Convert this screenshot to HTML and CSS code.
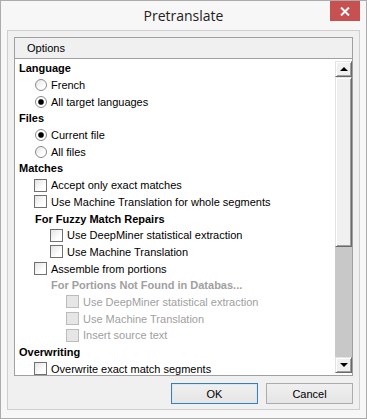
FILE: index.html
```html
<!DOCTYPE html>
<html>
<head>
    <meta charset="UTF-8">
    <title>Pretranslate</title>
    <link rel="stylesheet" href="styles.css">
</head>
<body>
    <div class="window">
        <div class="titlebar">
            <span></span>
            <span class="title">Pretranslate</span>
            <div class="close">
                <svg width="10" height="9" viewBox="0 0 10 9">
                    <path d="M1 0.5 L9 8.5 M9 0.5 L1 8.5" stroke="#fff" stroke-width="2"/>
                </svg>
            </div>
        </div>

        <div class="client">
            <div class="group">
                <div class="group-head">Options</div>
                <div class="list">
                    <div class="rows">
                        <div class="row head">Language</div>
                        <div class="row i1"><span class="radio"></span>French</div>
                        <div class="row i1"><span class="radio on"></span>All target languages</div>
                        <div class="row head">Files</div>
                        <div class="row i1"><span class="radio on"></span>Current file</div>
                        <div class="row i1"><span class="radio"></span>All files</div>
                        <div class="row head">Matches</div>
                        <div class="row i1"><span class="check"></span>Accept only exact matches</div>
                        <div class="row i1"><span class="check"></span>Use Machine Translation for whole segments</div>
                        <div class="row sub-head">For Fuzzy Match Repairs</div>
                        <div class="row i2"><span class="check"></span>Use DeepMiner statistical extraction</div>
                        <div class="row i2"><span class="check"></span>Use Machine Translation</div>
                        <div class="row i1"><span class="check"></span>Assemble from portions</div>
                        <div class="row sub-head2 off">For Portions Not Found in Databas...</div>
                        <div class="row i3 off"><span class="check"></span>Use DeepMiner statistical extraction</div>
                        <div class="row i3 off"><span class="check"></span>Use Machine Translation</div>
                        <div class="row i3 off"><span class="check"></span>Insert source text</div>
                        <div class="row head">Overwriting</div>
                        <div class="row i1"><span class="check"></span>Overwrite exact match segments</div>
                    </div>
                    <div class="scrollbar">
                        <div class="sb-btn"><span class="arrow-up"></span></div>
                        <div class="sb-thumb"></div>
                        <div class="sb-track"></div>
                        <div class="sb-btn"><span class="arrow-down"></span></div>
                    </div>
                </div>
            </div>

            <div class="buttons">
                <button class="btn default">OK</button>
                <button class="btn">Cancel</button>
            </div>
        </div>
    </div>
</body>
</html>
```

FILE: styles.css
```css
body {
    margin: 0;
    background: #f7f7f7;
    font-family: "Liberation Sans", Arial, sans-serif;
    font-size: 11px;
    color: #000;
}
.window {
    width: 367px;
    height: 419px;
    box-sizing: border-box;
    border: 1px solid #acacac;
    background: #f7f7f7;
    padding: 0 6px 8px 6px;
}
.titlebar {
    height: 29px;
    display: grid;
    grid-template-columns: 1fr auto 1fr;
    align-items: start;
}
.title {
    font-family: "Open Sans", sans-serif;
    font-size: 14px;
    color: #222;
    line-height: 30px;
}
.close {
    justify-self: end;
    width: 30px;
    height: 20px;
    background: #c75050;
    display: flex;
    align-items: center;
    justify-content: center;
}

.client {
    height: 380px;
    box-sizing: border-box;
    border: 1px solid #cfcfcf;
    background: #f0f0f0;
    padding: 6px 6px 5px 6px;
    display: flex;
    flex-direction: column;
}
.group {
    height: 339px;
    box-sizing: border-box;
    border: 1px solid #a0a0a0;
    display: flex;
    flex-direction: column;
}
.group-head {
    height: 20px;
    border-bottom: 1px solid #a0a0a0;
    padding-left: 12px;
    line-height: 21px;
    background: #f0f0f0;
}
.list {
    flex: 1;
    min-height: 0;
    background: #fff;
    display: flex;
}
.rows {
    flex: 1;
    overflow: hidden;
    padding-top: 1px;
}
.row {
    height: 16.7px;
    display: flex;
    align-items: center;
    white-space: nowrap;
}
.head { font-weight: bold; padding-left: 4px; }
.sub-head { font-weight: bold; padding-left: 20px; }
.sub-head2 { font-weight: bold; padding-left: 36px; }
.i1 { padding-left: 19px; }
.i2 { padding-left: 35px; }
.i3 { padding-left: 51px; }
.off { color: #a0a0a0; }

.check {
    width: 13px;
    height: 13px;
    box-sizing: border-box;
    border: 1px solid #707070;
    background: linear-gradient(135deg, #e4e4e4, #fff 70%);
    margin-right: 4px;
    flex: none;
}
.off .check {
    border-color: #bcbcbc;
    background: #e6e6e6;
}
.radio {
    width: 12px;
    height: 12px;
    box-sizing: border-box;
    border: 1px solid #8a8a8a;
    border-radius: 50%;
    background: linear-gradient(135deg, #e4e4e4, #fff 70%);
    margin: 0 4px 0 1px;
    flex: none;
}
.radio.on {
    background: radial-gradient(circle, #000 2.2px, #777 2.8px, transparent 3.4px), #fff;
}

.scrollbar {
    width: 17px;
    margin: 2px 0;
    display: flex;
    flex-direction: column;
}
.sb-btn {
    height: 16px;
    box-sizing: border-box;
    background: #f0f0f0;
    border-top: 1px solid #e3e3e3;
    border-left: 1px solid #e3e3e3;
    border-right: 1px solid #696969;
    border-bottom: 1px solid #696969;
    box-shadow: inset 1px 1px #fff, inset -1px -1px #a0a0a0;
    display: flex;
    align-items: center;
    justify-content: center;
}
.arrow-up {
    border-left: 4px solid transparent;
    border-right: 4px solid transparent;
    border-bottom: 4px solid #000;
}
.arrow-down {
    border-left: 4px solid transparent;
    border-right: 4px solid transparent;
    border-top: 4px solid #000;
}
.sb-thumb {
    height: 170px;
    box-sizing: border-box;
    background: #f0f0f0;
    border-top: 1px solid #e3e3e3;
    border-left: 1px solid #e3e3e3;
    border-right: 1px solid #696969;
    border-bottom: 1px solid #696969;
    box-shadow: inset 1px 1px #fff, inset -1px -1px #a0a0a0;
}
.sb-track {
    flex: 1;
    background: #c8c8c8;
}

.buttons {
    margin-top: 7px;
    display: flex;
    justify-content: flex-end;
    gap: 8px;
}
.btn {
    width: 87px;
    height: 21px;
    box-sizing: border-box;
    border: 1px solid #acacac;
    background: linear-gradient(#f0f0f0, #e5e5e5);
    font-family: "Liberation Sans", Arial, sans-serif;
    font-size: 11px;
    color: #000;
    padding: 0;
}
.btn.default {
    border-color: #3c7fb1;
    box-shadow: inset 0 0 0 1px #d7e8f6;
}
```
